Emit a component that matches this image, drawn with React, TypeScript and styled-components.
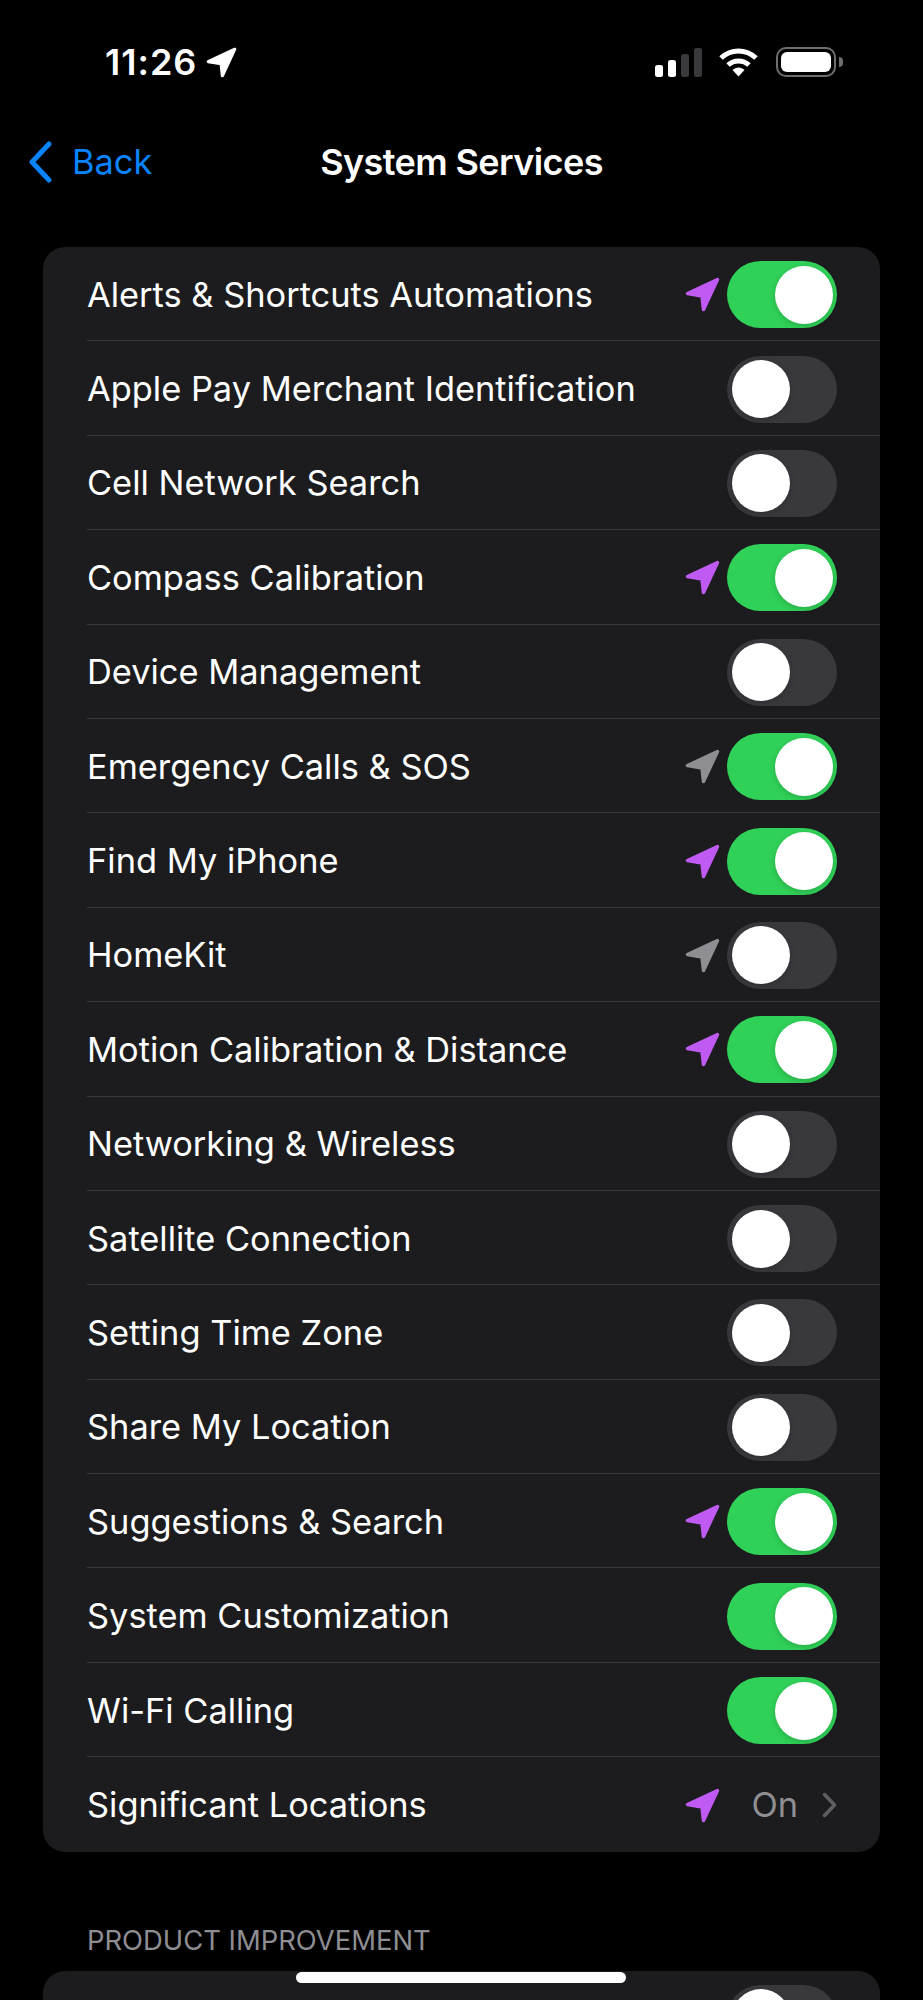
import React from "react";
import styled, { createGlobalStyle } from "styled-components";

const Global = createGlobalStyle`
  html, body { margin: 0; padding: 0; background: #000; }
  body { font-family: "Inter", "Liberation Sans", sans-serif; color: #fff; }
`;

const Page = styled.div`
  position: relative;
  width: 923px;
  height: 2000px;
  overflow: hidden;
  background: #000;
`;

const StatusBar = styled.div`
  display: flex;
  align-items: center;
  justify-content: space-between;
  height: 30px;
  padding: 47px 87px 0 105px;
`;

const TimeGroup = styled.div`
  display: flex;
  align-items: center;
  gap: 9px;
`;

const Time = styled.span`
  font-size: 36px;
  line-height: 30px;
  font-weight: 600;
  letter-spacing: 1px;
`;

const StatusIcons = styled.div`
  display: flex;
  align-items: center;
  gap: 0;
`;

const Signal = styled.div`
  display: flex;
  align-items: flex-end;
  gap: 5px;
  height: 30px;
  margin-right: 16px;
`;

const Bar = styled.div<{ $h: number; $dim?: boolean }>`
  width: 8px;
  height: ${(p) => p.$h}px;
  border-radius: 2.5px;
  background: ${(p) => (p.$dim ? "#3a3a3c" : "#fff")};
`;

const Battery = styled.div`
  position: relative;
  box-sizing: border-box;
  width: 60px;
  height: 30px;
  margin-left: 17px;
  border: 2.5px solid #6e6e70;
  border-radius: 10px;
  padding: 3px;
  &::after {
    content: "";
    position: absolute;
    right: -8.5px;
    top: 7.5px;
    width: 4px;
    height: 10px;
    background: #6e6e70;
    border-radius: 0 4px 4px 0;
  }
`;

const BatteryFill = styled.div`
  width: 100%;
  height: 100%;
  background: #fff;
  border-radius: 6px;
`;

const Nav = styled.div`
  display: grid;
  grid-template-columns: 1fr auto 1fr;
  align-items: center;
  height: 60px;
  margin-top: 55px;
  padding: 0 28px;
`;

const BackLink = styled.div`
  display: flex;
  align-items: center;
  gap: 20px;
  color: #0a84ff;
  font-size: 34.4px;
  line-height: 44px;
`;

const Title = styled.div`
  font-size: 36px;
  line-height: 44px;
  font-weight: 600;
  letter-spacing: -0.6px;
`;

const Card = styled.div`
  margin: 0 43px;
  background: #1c1c1e;
  border-radius: 22px;
  overflow: hidden;
`;

const FirstCard = styled(Card)`
  margin-top: 55px;
`;

const Row = styled.div`
  box-sizing: border-box;
  height: 94.4px;
  padding-left: 44px;
`;

const RowInner = styled.div<{ $last?: boolean }>`
  box-sizing: border-box;
  height: 100%;
  display: flex;
  align-items: center;
  justify-content: space-between;
  padding: 2px 43px 0 0;
  border-bottom: ${(p) => (p.$last ? "none" : "1px solid #38383a")};
`;

const Label = styled.span`
  font-size: 34.4px;
  line-height: 44px;
  color: #fff;
`;

const Trailing = styled.div`
  display: flex;
  align-items: center;
`;

const Arrow = styled.svg`
  display: block;
  width: 35px;
  height: 35px;
`;

const ArrowSlot = styled.div`
  margin-right: 7px;
`;

const Track = styled.div<{ $on: boolean }>`
  box-sizing: border-box;
  display: flex;
  justify-content: ${(p) => (p.$on ? "flex-end" : "flex-start")};
  align-items: center;
  width: 110px;
  height: 67px;
  padding: 0 4.5px;
  border-radius: 34px;
  background: ${(p) => (p.$on ? "#30d158" : "#39393d")};
`;

const Knob = styled.div`
  width: 58px;
  height: 58px;
  border-radius: 50%;
  background: #fff;
  box-shadow: 0 2px 6px rgba(0, 0, 0, 0.18);
`;

const Value = styled.span`
  font-size: 34.4px;
  line-height: 44px;
  color: #8e8e93;
  margin-left: 31px;
`;

const Chevron = styled.svg`
  display: block;
  width: 15px;
  height: 26px;
  margin-left: 24px;
`;

const SectionHeader = styled.div`
  margin: 71px 87px 0;
  font-size: 27.4px;
  line-height: 34px;
  color: #8e8e93;
`;

const SecondCard = styled(Card)`
  margin-top: 14px;
`;

const HomeIndicator = styled.div`
  position: absolute;
  left: 296px;
  top: 1972px;
  width: 330px;
  height: 11px;
  border-radius: 6px;
  background: #fff;
`;

type Loc = "purple" | "gray" | undefined;

const rows: { label: string; on: boolean; loc?: Loc }[] = [
  { label: "Alerts & Shortcuts Automations", on: true, loc: "purple" },
  { label: "Apple Pay Merchant Identification", on: false },
  { label: "Cell Network Search", on: false },
  { label: "Compass Calibration", on: true, loc: "purple" },
  { label: "Device Management", on: false },
  { label: "Emergency Calls & SOS", on: true, loc: "gray" },
  { label: "Find My iPhone", on: true, loc: "purple" },
  { label: "HomeKit", on: false, loc: "gray" },
  { label: "Motion Calibration & Distance", on: true, loc: "purple" },
  { label: "Networking & Wireless", on: false },
  { label: "Satellite Connection", on: false },
  { label: "Setting Time Zone", on: false },
  { label: "Share My Location", on: false },
  { label: "Suggestions & Search", on: true, loc: "purple" },
  { label: "System Customization", on: true },
  { label: "Wi-Fi Calling", on: true },
];

function LocationArrow({ color, size }: { color: string; size?: number }) {
  return (
    <Arrow viewBox="0 0 35 35" style={size ? { width: size, height: size } : undefined}>
      <path
        d="M32.5 2.5 L2.5 16.5 L17 19 L18.5 32.5 Z"
        fill={color}
        stroke={color}
        strokeWidth="3.5"
        strokeLinejoin="round"
      />
    </Arrow>
  );
}

const colors = { purple: "#bf5af2", gray: "#8e8e93" };

export default function App() {
  return (
    <Page>
      <Global />
      <StatusBar>
        <TimeGroup>
          <Time>11:26</Time>
          <LocationArrow color="#fff" size={31} />
        </TimeGroup>
        <StatusIcons>
          <Signal>
            <Bar $h={12} />
            <Bar $h={17} />
            <Bar $h={23} $dim />
            <Bar $h={29} $dim />
          </Signal>
          <svg width="41" height="30" viewBox="0 0 41 30">
            <path d="M3 11 C13 1.5 28 1.5 38 11" fill="none" stroke="#fff" strokeWidth="5" strokeLinecap="butt" />
            <path d="M10 18 C16 12.5 25 12.5 31 18" fill="none" stroke="#fff" strokeWidth="5" strokeLinecap="butt" />
            <path d="M14.5 23 C18 19.5 23 19.5 26.5 23 L20.5 29.5 Z" fill="#fff" />
          </svg>
          <Battery>
            <BatteryFill />
          </Battery>
        </StatusIcons>
      </StatusBar>

      <Nav>
        <BackLink>
          <svg width="24" height="42" viewBox="0 0 24 42">
            <path d="M21 3 L4 21 L21 39" fill="none" stroke="#0a84ff" strokeWidth="5" strokeLinecap="round" strokeLinejoin="round" />
          </svg>
          <span>Back</span>
        </BackLink>
        <Title>System Services</Title>
        <span />
      </Nav>

      <FirstCard>
        {rows.map((r) => (
          <Row key={r.label}>
            <RowInner>
              <Label>{r.label}</Label>
              <Trailing>
                {r.loc && (
                  <ArrowSlot>
                    <LocationArrow color={colors[r.loc]} />
                  </ArrowSlot>
                )}
                <Track $on={r.on}>
                  <Knob />
                </Track>
              </Trailing>
            </RowInner>
          </Row>
        ))}
        <Row>
          <RowInner $last>
            <Label>Significant Locations</Label>
            <Trailing>
              <LocationArrow color={colors.purple} />
              <Value>On</Value>
              <Chevron viewBox="0 0 15 26">
                <path d="M2.5 2.5 L12.5 13 L2.5 23.5" fill="none" stroke="#5f5f63" strokeWidth="3.5" strokeLinecap="round" strokeLinejoin="round" />
              </Chevron>
            </Trailing>
          </RowInner>
        </Row>
      </FirstCard>

      <SectionHeader>PRODUCT IMPROVEMENT</SectionHeader>

      <SecondCard>
        <Row>
          <RowInner>
            <Label> </Label>
            <Trailing>
              <Track $on={false}>
                <Knob />
              </Track>
            </Trailing>
          </RowInner>
        </Row>
      </SecondCard>

      <HomeIndicator />
    </Page>
  );
}
